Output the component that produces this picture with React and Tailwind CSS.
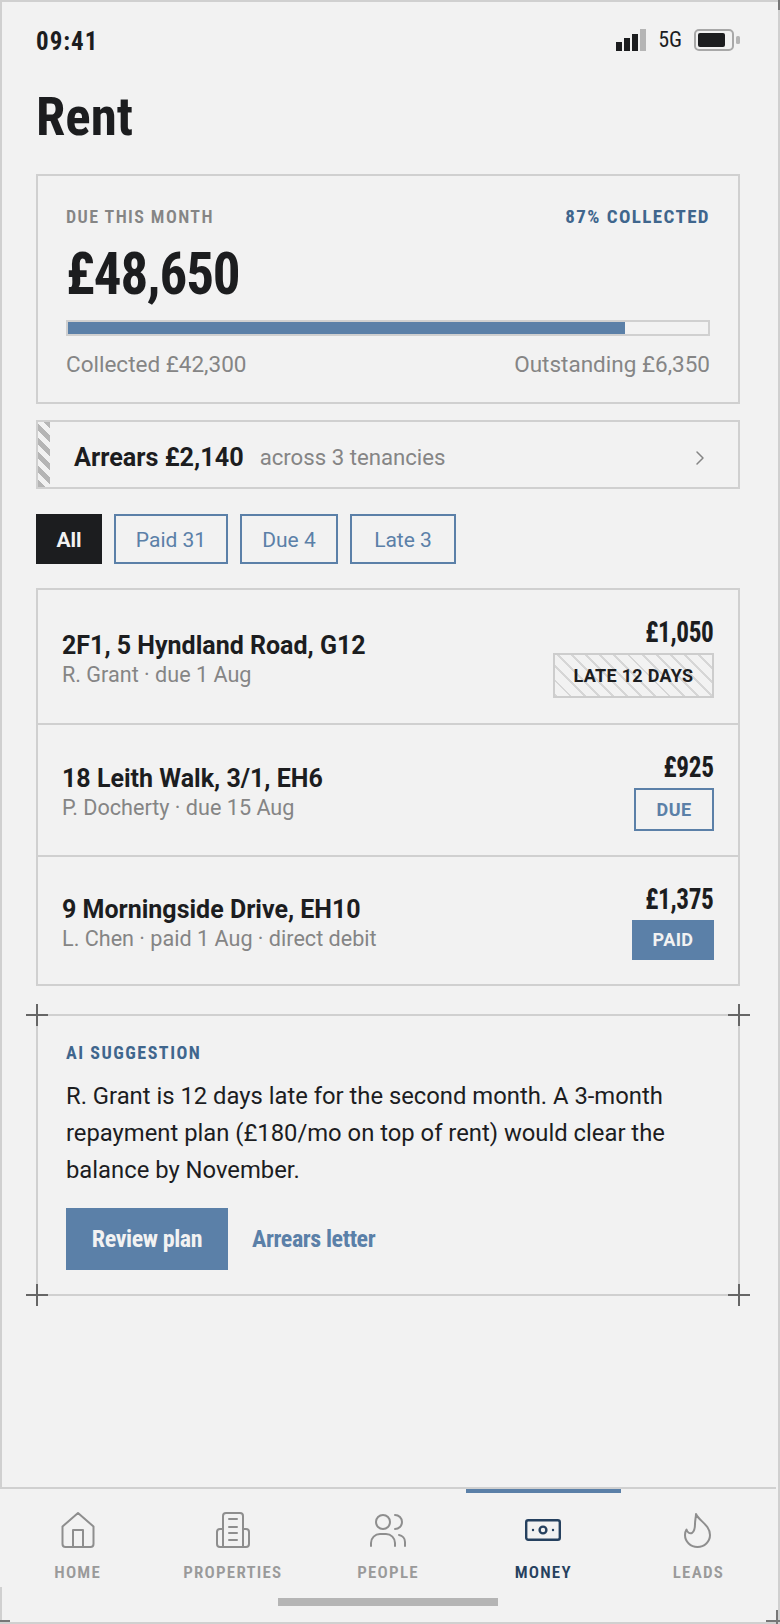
import { ChevronRight } from "lucide-react";

const sans = "font-['Roboto','Liberation_Sans',sans-serif]";
const narrow = "font-['Roboto_Condensed','Liberation_Sans',sans-serif]";

const HomeIcon = () => (
  <svg width="34" height="38" viewBox="0 0 34 38" fill="none" stroke="currentColor" strokeWidth="2" strokeLinejoin="round" strokeLinecap="round">
    <path d="M1.5 15.5 17 2l15.5 13.5V33a3 3 0 0 1-3 3h-25a3 3 0 0 1-3-3z" />
    <path d="M12 36V19h10v17" />
  </svg>
);

const BuildingIcon = () => (
  <svg width="36" height="38" viewBox="0 0 36 38" fill="none" stroke="currentColor" strokeWidth="2" strokeLinejoin="round" strokeLinecap="round">
    <path d="M8 36V5a3 3 0 0 1 3-3h14a3 3 0 0 1 3 3v31" />
    <path d="M8 18H5a3 3 0 0 0-3 3v12a3 3 0 0 0 3 3h26a3 3 0 0 0 3-3V21a3 3 0 0 0-3-3h-3" />
    <path d="M14 8h8M14 16h8M14 22h8M14 29h8" />
  </svg>
);

const PeopleIcon = () => (
  <svg width="38" height="38" viewBox="0 0 38 38" fill="none" stroke="currentColor" strokeWidth="2" strokeLinecap="round">
    <circle cx="14" cy="11" r="7" />
    <path d="M2 35v-3a9 9 0 0 1 9-9h6a9 9 0 0 1 9 9v3" />
    <path d="M26 4a7 7 0 0 1 0 14" />
    <path d="M30 24a7 7 0 0 1 6 7v4" />
  </svg>
);

const MoneyIcon = () => (
  <svg width="38" height="38" viewBox="0 0 38 38" fill="none" stroke="currentColor" strokeWidth="2.4" strokeLinecap="round">
    <rect x="2.2" y="9.2" width="33.6" height="19.6" rx="2" />
    <circle cx="19" cy="19" r="3.4" />
    <path d="M9 19h.01M29 19h.01" />
  </svg>
);

const FlameIcon = () => (
  <svg width="28" height="38" viewBox="0 0 28 38" fill="none" stroke="currentColor" strokeWidth="2" strokeLinejoin="round" strokeLinecap="round">
    <path d="M12 3c3 7 14 11 14 21a12.5 12 0 0 1-25 0c0-2 .5-4 1.5-5.5 1 3 3 4.5 5.5 3.5 3-2 3-6 3-9 0-4 1-7 1-10z" />
  </svg>
);

const tabs = [
  { label: "HOME", icon: <HomeIcon /> },
  { label: "PROPERTIES", icon: <BuildingIcon /> },
  { label: "PEOPLE", icon: <PeopleIcon /> },
  { label: "MONEY", icon: <MoneyIcon />, active: true },
  { label: "LEADS", icon: <FlameIcon /> },
];

const rows = [
  { title: "2F1, 5 Hyndland Road, G12", sub: "R. Grant · due 1 Aug", amount: "£1,050", status: "late", height: "h-[133px]" },
  { title: "18 Leith Walk, 3/1, EH6", sub: "P. Docherty · due 15 Aug", amount: "£925", status: "due", height: "h-[132px]" },
  { title: "9 Morningside Drive, EH10", sub: "L. Chen · paid 1 Aug · direct debit", amount: "£1,375", status: "paid", height: "h-[129px]" },
];

const Badge = ({ status }) => {
  if (status === "late") {
    return (
      <span className="flex h-[45px] w-[161px] items-center justify-center border-2 border-[#cdcdcd] bg-[repeating-linear-gradient(45deg,#d6d6d6_0_2px,transparent_2px_10px)] text-[18px] font-bold tracking-[0.3px] text-[#1c1d1f]">
        LATE 12 DAYS
      </span>
    );
  }
  if (status === "due") {
    return (
      <span className="flex h-[43px] w-[80px] items-center justify-center border-2 border-[#5b80a8] text-[18px] font-bold tracking-[0.4px] text-[#5b80a8]">
        DUE
      </span>
    );
  }
  return (
    <span className="flex h-[40px] w-[82px] items-center justify-center bg-[#5b80a8] text-[18px] font-bold tracking-[0.4px] text-[#f2f2f2]">
      PAID
    </span>
  );
};

const Cross = ({ className }) => (
  <span className={`absolute h-[22px] w-[22px] ${className}`}>
    <span className="absolute left-0 top-[10px] h-[2px] w-[22px] bg-[#666]" />
    <span className="absolute left-[10px] top-0 h-[22px] w-[2px] bg-[#666]" />
  </span>
);

export default function App() {
  return (
    <div className={`${sans} relative flex h-[1624px] w-[780px] flex-col border-2 border-[#d0d0d0] bg-[#f2f2f2] text-[#1c1d1f]`}>
      <div className="flex-1 pl-[34px] pr-[38px]">
        {/* Status bar */}
        <div className="flex h-[55px] items-end justify-between">
          <span className={`${narrow} text-[25px] font-bold leading-[30px] tracking-[1px]`}>09:41</span>
          <div className="flex items-center gap-[12px] pb-[5px]">
            <svg width="30" height="22" viewBox="0 0 30 22">
              <rect x="0" y="13" width="6" height="9" fill="#1c1d1f" />
              <rect x="8" y="9" width="6" height="13" fill="#1c1d1f" />
              <rect x="16" y="5" width="6" height="17" fill="#1c1d1f" />
              <rect x="24" y="0" width="6" height="22" fill="#b5b5b5" />
            </svg>
            <span className={`${narrow} text-[22px] leading-[24px]`}>5G</span>
            <svg width="46" height="22" viewBox="0 0 46 22">
              <rect x="1" y="1" width="38" height="20" rx="4" fill="none" stroke="#a8a8a8" strokeWidth="2" />
              <rect x="4" y="4" width="27" height="14" rx="2" fill="#1c1d1f" />
              <rect x="42" y="7" width="4" height="8" rx="1.5" fill="#b5b5b5" />
            </svg>
          </div>
        </div>

        <h1 className={`${narrow} mt-[28px] text-[53px] font-bold leading-[64px]`}>Rent</h1>

        {/* Due this month */}
        <div className="mt-[25px] h-[230px] border-2 border-[#d0d0d0] px-[28px] pt-[30px]">
          <div className="flex items-center justify-between">
            <span className={`${narrow} text-[18px] font-semibold leading-[22px] tracking-[1.4px] text-[#858585]`}>DUE THIS MONTH</span>
            <span className={`${narrow} text-[19px] font-bold leading-[22px] tracking-[1.4px] text-[#3f668d]`}>87% COLLECTED</span>
          </div>
          <div className={`${narrow} mt-[11px] origin-left scale-x-[0.933] text-[59px] font-bold leading-[70px] tracking-[-1.2px]`}>£48,650</div>
          <div className="mt-[11px] h-[16px] border-2 border-[#d0d0d0]">
            <div className="h-full w-[87%] bg-[#5b80a8]" />
          </div>
          <div className="mt-[14px] flex justify-between text-[22.5px] leading-[28px] text-[#858585]">
            <span>Collected £42,300</span>
            <span>Outstanding £6,350</span>
          </div>
        </div>

        {/* Arrears */}
        <div className="mt-[16px] flex h-[69px] items-stretch border-2 border-[#d0d0d0]">
          <div className="w-[12px] bg-[repeating-linear-gradient(45deg,#b5b5b5_0_5px,transparent_5px_10px)]" />
          <div className="flex flex-1 items-center pl-[24px] pr-[26px] pt-[6px]">
            <span className="text-[25.2px] font-bold">Arrears £2,140</span>
            <span className="ml-[16px] text-[22.2px] text-[#858585]">across 3 tenancies</span>
            <ChevronRight className="ml-auto h-[24px] w-[24px] text-[#858585]" strokeWidth={1.5} />
          </div>
        </div>

        {/* Filter chips */}
        <div className="mt-[25px] flex gap-[12px]">
          <span className="flex h-[50px] w-[66px] items-center justify-center bg-[#1c1d1f] pt-[3px] text-[21px] font-bold text-[#f2f2f2]">All</span>
          <span className="flex h-[50px] w-[114px] items-center justify-center border-2 border-[#5b80a8] pt-[3px] text-[21px] text-[#5b80a8]">Paid 31</span>
          <span className="flex h-[50px] w-[98px] items-center justify-center border-2 border-[#5b80a8] pt-[3px] text-[21px] text-[#5b80a8]">Due 4</span>
          <span className="flex h-[50px] w-[106px] items-center justify-center border-2 border-[#5b80a8] pt-[3px] text-[21px] text-[#5b80a8]">Late 3</span>
        </div>

        {/* Tenancy rows */}
        <div className="mt-[24px] border-2 border-[#d0d0d0]">
          {rows.map((row, i) => (
            <div key={row.title} className={`flex ${row.height} items-center justify-between pl-[24px] pr-[24px] ${i > 0 ? "border-t-2 border-[#d0d0d0]" : ""}`}>
              <div className="pt-[4px]">
                <div className="text-[25px] font-bold leading-[32px]">{row.title}</div>
                <div className="text-[21.6px] leading-[26px] text-[#858585]">{row.sub}</div>
              </div>
              <div className="flex flex-col items-end gap-[4px]">
                <span className={`${narrow} origin-right scale-x-[0.87] text-[29px] font-bold leading-[34px] tracking-[-0.4px]`}>{row.amount}</span>
                <Badge status={row.status} />
              </div>
            </div>
          ))}
        </div>

        {/* AI suggestion */}
        <div className="relative mt-[28px] h-[282px] border-2 border-[#d0d0d0] px-[28px] pt-[26px]">
          <Cross className="left-[-12px] top-[-12px]" />
          <Cross className="right-[-12px] top-[-12px]" />
          <Cross className="bottom-[-12px] left-[-12px]" />
          <Cross className="bottom-[-12px] right-[-12px]" />
          <div className={`${narrow} text-[18px] font-bold leading-[22px] tracking-[1.5px] text-[#3f668d]`}>AI SUGGESTION</div>
          <p className="mt-[14px] text-[23.8px] leading-[36.8px]">
            R. Grant is 12 days late for the second month. A 3-month repayment plan (£180/mo on top of rent) would clear the balance by November.
          </p>
          <div className="mt-[20px] flex items-center gap-[24px]">
            <span className={`${narrow} flex h-[62px] w-[162px] items-center justify-center bg-[#5b80a8] text-[24px] font-bold tracking-[-0.4px] text-[#f2f2f2]`}>Review plan</span>
            <span className={`${narrow} text-[24px] font-bold tracking-[-0.4px] text-[#5b80a8]`}>Arrears letter</span>
          </div>
        </div>
      </div>

      {/* Bottom nav */}
      <div className="relative -ml-[2px] flex h-[135px] w-[776px] flex-col border-t-2 border-[#d0d0d0] bg-[#f2f2f2]">
        <div className="flex">
          {tabs.map((tab) => (
            <div key={tab.label} className="relative flex h-[109px] flex-1 flex-col items-center pt-[22px]">
              {tab.active && <span className="absolute left-0 right-0 top-0 h-[4px] bg-[#5b80a8]" />}
              <span className={`flex h-[38px] items-center justify-center ${tab.active ? "text-[#26415f]" : "text-[#8e8e8e]"}`}>{tab.icon}</span>
              <span className={`${narrow} mt-[12px] text-[17px] font-semibold leading-[22px] tracking-[1.2px] ${tab.active ? "text-[#26415f]" : "text-[#9a9a9a]"}`}>{tab.label}</span>
            </div>
          ))}
        </div>
        <div className="mx-auto h-[8px] w-[220px] bg-[#b5b5b5]" />
      </div>

      {/* Frame corner marks */}
      <span className="absolute bottom-[-2px] left-[-2px] h-[37px] w-[2px] bg-[#d0d0d0]" />
      <span className="absolute bottom-0 left-[-2px] h-[2px] w-[10px] bg-[#777]" />
      <span className="absolute bottom-0 right-[-2px] h-[2px] w-[14px] bg-[#777]" />
      <span className="absolute bottom-[-2px] right-0 h-[14px] w-[2px] bg-[#777]" />
      <span className="absolute right-[-2px] top-[-2px] h-[10px] w-[2px] bg-[#777]" />
    </div>
  );
}
